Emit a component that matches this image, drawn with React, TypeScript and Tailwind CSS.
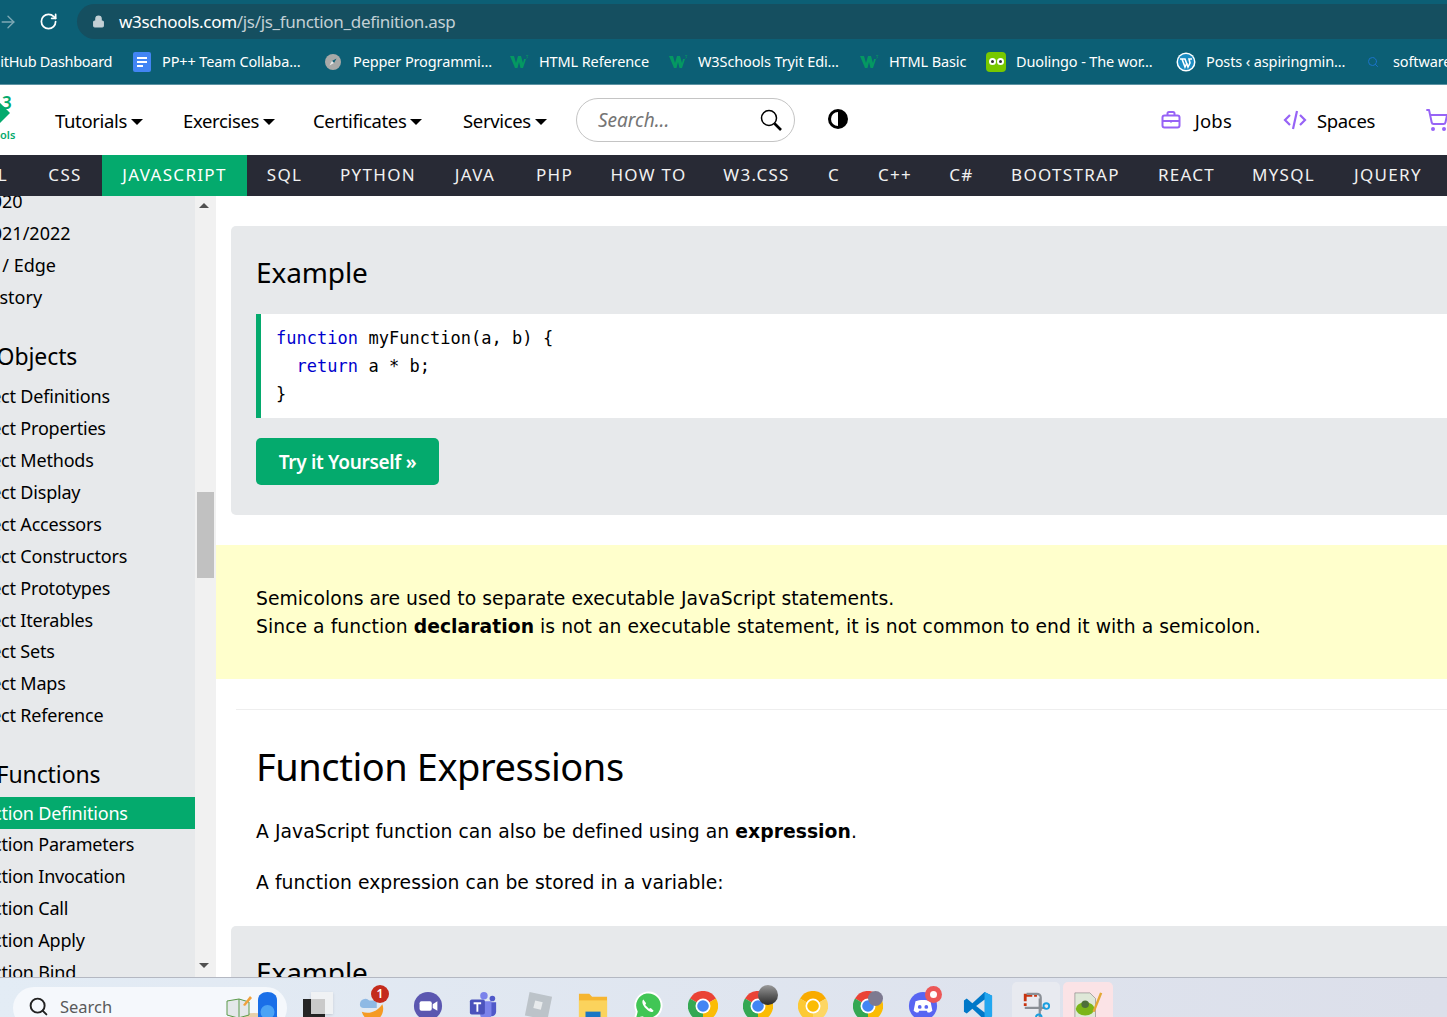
import { ReactNode } from "react";
import { Lock, RotateCw, ArrowRight, Search, ShoppingCart } from "lucide-react";

const navFont = "font-['Noto_Sans',sans-serif]";

const topics = [
  { label: "CSS", w: "w-[74px]" },
  { label: "JAVASCRIPT", w: "w-[145px]", active: true },
  { label: "SQL", w: "w-[75px]" },
  { label: "PYTHON", w: "w-[112px]" },
  { label: "JAVA", w: "w-[82px]" },
  { label: "PHP", w: "w-[77px]" },
  { label: "HOW TO", w: "w-[111px]" },
  { label: "W3.CSS", w: "w-[105px]" },
  { label: "C", w: "w-[50px]" },
  { label: "C++", w: "w-[72px]" },
  { label: "C#", w: "w-[61px]" },
  { label: "BOOTSTRAP", w: "w-[147px]" },
  { label: "REACT", w: "w-[95px]" },
  { label: "MYSQL", w: "w-[99px]" },
  { label: "JQUERY", w: "w-[110px]" },
];

const jsRows = ["JS 2020", "JS 2021/2022", "JS IE / Edge", "JS History"];
const objectRows = [
  "Object Definitions",
  "Object Properties",
  "Object Methods",
  "Object Display",
  "Object Accessors",
  "Object Constructors",
  "Object Prototypes",
  "Object Iterables",
  "Object Sets",
  "Object Maps",
  "Object Reference",
];
const functionRows = [
  "Function Definitions",
  "Function Parameters",
  "Function Invocation",
  "Function Call",
  "Function Apply",
  "Function Bind",
];

function W3Mark() {
  return (
    <svg viewBox="0 0 20 16" className="h-4 w-5">
      <polygon points="1,2 5,2 7,9 9,2 12,2 14,9 15,5 17,5 14,14 11.5,14 10,8 8.5,14 6,14" fill="#059862" />
      <path d="M17 1.5h2l-1 1.2c.8.2.8 1.6-.6 1.6" fill="none" stroke="#059862" strokeWidth=".6" />
    </svg>
  );
}

function Bookmark({ icon, label, w }: { icon: ReactNode; label: string; w: string }) {
  return (
    <div className="flex shrink-0 items-center">
      <span className="flex w-5 shrink-0 items-center justify-center">{icon}</span>
      <span className={`ml-[10px] whitespace-nowrap ${w}`}>{label}</span>
    </div>
  );
}

function ChromeIcon({ c1 = "#ea4335", c2 = "#34a853", c3 = "#fbbc04", c4 = "#4285f4" }) {
  return (
    <svg viewBox="0 0 32 32" className="h-[30px] w-[30px]">
      <path d="M16 16 L2.1 8 A16 16 0 0 1 29.9 8 Z" fill={c1} />
      <path d="M16 16 L2.1 8 A16 16 0 0 0 16 32 Z" fill={c2} />
      <path d="M16 16 L29.9 8 A16 16 0 0 1 16 32 Z" fill={c3} />
      <circle cx="16" cy="16" r="8" fill="#fff" />
      <circle cx="16" cy="16" r="6.2" fill={c4} />
    </svg>
  );
}

function TaskSlot({ children, box = "w-[55px]" }: { children: ReactNode; box?: string }) {
  return <div className={`relative flex h-[35px] shrink-0 justify-center pt-[9px] ${box}`}>{children}</div>;
}

function SideRow({ label, active }: { label: string; active?: boolean }) {
  return (
    <div
      className={`flex h-[31.875px] items-center whitespace-nowrap text-[18px] ${
        active ? "bg-[#04AA6D] text-white" : "text-black"
      }`}
    >
      <span className="-ml-[38px]">{label}</span>
    </div>
  );
}

function SideHeading({ label, h }: { label: string; h: string }) {
  return (
    <div className={`flex items-center whitespace-nowrap pt-[19px] text-[23px] tracking-[-0.1px] text-black ${h}`}>
      <span className="-ml-[28px]">{label}</span>
    </div>
  );
}

function NavLink({ label, w }: { label: string; w: string }) {
  return (
    <div className={`mt-[2px] flex shrink-0 items-center ${w}`}>
      <span>{label}</span>
      <span className="ml-[4px] mt-[1px] h-0 w-0 border-x-[6px] border-t-[6px] border-x-transparent border-t-black" />
    </div>
  );
}

export default function App() {
  return (
    <div className={`flex h-[1017px] w-[1447px] flex-col overflow-hidden bg-white ${navFont}`}>
      {/* browser toolbar */}
      <div className="flex h-[39px] shrink-0 items-end bg-[#0c5f75]">
        <div className="flex h-[35px] w-[77px] shrink-0 items-center">
          <ArrowRight size={20} strokeWidth={1.6} className="-ml-[2px] text-[#7fa9b5]" />
          <RotateCw size={19} strokeWidth={2.2} className="ml-[21px] text-white" />
        </div>
        <div className="flex h-[35px] flex-1 items-center rounded-l-[18px] bg-[#154f60] pl-[15px] text-[17px] tracking-[-0.32px]">
          <Lock size={13} fill="#c3d0d5" strokeWidth={2} className="text-[#c3d0d5]" />
          <span className="ml-[14px] text-white">w3schools.com</span>
          <span className="text-[#c3d0d5]">/js/js_function_definition.asp</span>
        </div>
      </div>

      {/* bookmarks */}
      <div className="flex h-[46px] shrink-0 items-center gap-[20px] border-b border-[#5d93a3] bg-[#0c5f75] text-[14.5px] tracking-[-0.12px] text-white">
        <span className="-ml-[10px] w-[122px] shrink-0 whitespace-nowrap text-right tracking-[-0.3px]">GitHub Dashboard</span>
        <Bookmark
          w="w-[141px]"
          label="PP++ Team Collaba..."
          icon={
            <span className="flex h-[20px] w-[18px] flex-col justify-center gap-[2px] rounded-[2px] bg-[#4285f4] px-[4px]">
              <span className="h-[2px] bg-white" />
              <span className="h-[2px] bg-white" />
              <span className="h-[2px] w-[6px] bg-white" />
            </span>
          }
        />
        <Bookmark
          w="w-[136px]"
          label="Pepper Programmi..."
          icon={
            <svg viewBox="0 0 16 16" className="h-4 w-4">
              <circle cx="8" cy="8" r="8" fill="#a8a9a8" />
              <polygon points="11.5,4.5 9,9 7,7" fill="#0c5f75" />
              <polygon points="4.5,11.5 7,7 9,9" fill="#e8e8e8" />
            </svg>
          }
        />
        <Bookmark w="w-[109px]" label="HTML Reference" icon={<W3Mark />} />
        <Bookmark w="w-[141px]" label="W3Schools Tryit Edi..." icon={<W3Mark />} />
        <Bookmark w="w-[77px]" label="HTML Basic" icon={<W3Mark />} />
        <Bookmark
          w="w-[140px]"
          label="Duolingo - The wor..."
          icon={
            <span className="flex h-5 w-5 items-center justify-center gap-[1px] rounded-[4px] bg-[#78c800]">
              <span className="h-[7px] w-[7px] rounded-full border-2 border-white bg-[#333]" />
              <span className="h-[7px] w-[7px] rounded-full border-2 border-white bg-[#333]" />
            </span>
          }
        />
        <Bookmark
          w="w-[137px]"
          label="Posts ‹ aspiringmin..."
          icon={
            <svg viewBox="0 0 20 20" className="h-5 w-5">
              <circle cx="10" cy="10" r="9.5" fill="#fff" />
              <circle cx="10" cy="10" r="8" fill="#1a8cc2" />
              <path d="M4 7h5l3 8 2-4-1-4h3" fill="none" stroke="#fff" strokeWidth="1.6" />
              <path d="M6 7l3 8 2-4" fill="none" stroke="#fff" strokeWidth="1.6" />
            </svg>
          }
        />
        <Bookmark w="w-[80px]" label="software" icon={<Search size={12} strokeWidth={2} className="text-[#1b73c9]" />} />
      </div>

      {/* site nav */}
      <div className="flex h-[70px] shrink-0 items-center bg-white text-[18.5px] tracking-[-0.35px] text-black">
        <div className="relative h-full w-[55px] shrink-0">
          <span className="absolute left-[2px] top-[5px] text-[17px] font-semibold text-[#04AA6D]">3</span>
          <span className="absolute -left-[9px] top-[20px] h-[20px] w-[14px] rotate-45 bg-[#04AA6D]" />
          <span className="absolute left-0 top-[42px] text-[11px] font-semibold tracking-normal text-[#04AA6D]">ols</span>
        </div>
        <NavLink label="Tutorials" w="w-[128px]" />
        <NavLink label="Exercises" w="w-[130px]" />
        <NavLink label="Certificates" w="w-[150px]" />
        <NavLink label="Services" w="w-[113px]" />
        <div className="flex h-[44px] w-[219px] shrink-0 items-center justify-between rounded-full border border-[#c4c4c4] pl-[21px] pr-[11px] text-[19px] italic tracking-normal text-[#757575]">
          <span>Search...</span>
          <svg viewBox="0 0 24 24" className="h-6 w-6" fill="none" stroke="#000">
            <circle cx="10" cy="10" r="7.5" strokeWidth="1.5" />
            <path d="M15.5 15.5L22 22" strokeWidth="2.6" />
          </svg>
        </div>
        <svg viewBox="0 0 20 20" className="-mt-[2px] ml-[33px] h-5 w-5 shrink-0">
          <circle cx="10" cy="10" r="10" fill="#000" />
          <path d="M10 3a7 7 0 0 0 0 14z" fill="#fff" />
        </svg>
        <div className="ml-auto mt-[2px] flex items-center">
          <svg viewBox="0 0 20 20" fill="none" stroke="#9763f6" strokeWidth="2" className="-mt-[2px] h-5 w-5">
            <rect x="1.5" y="5.5" width="17" height="12" rx="2" />
            <path d="M6.5 5V3.5a1.5 1.5 0 0 1 1.5-1.5h4a1.5 1.5 0 0 1 1.5 1.5V5M1.5 11h17M10 10v2.5" />
          </svg>
          <span className="ml-[14px] tracking-[0.2px]">Jobs</span>
          <svg viewBox="0 0 24 20" fill="none" stroke="#9763f6" strokeWidth="2.2" className="-mt-[2px] ml-[51px] h-5 w-6">
            <path d="M7 5l-5 5 5 5M17 5l5 5-5 5M14 1l-4 18" />
          </svg>
          <span className="ml-[10px]">Spaces</span>
          <ShoppingCart size={24} strokeWidth={2} className="-mr-[2px] -mt-[2px] ml-[50px] text-[#9763f6]" />
        </div>
      </div>

      {/* topic bar */}
      <div className="flex h-[41px] shrink-0 items-stretch bg-[#282A35] text-[17px] tracking-[1.3px] text-[#f1f1f1]">
        <span className="flex w-[28px] shrink-0 items-center justify-end overflow-hidden pb-[2px] pr-[20px]">L</span>
        {topics.map((t) => (
          <span
            key={t.label}
            className={`flex shrink-0 items-center justify-center whitespace-nowrap pb-[2px] ${t.w} ${t.active ? "bg-[#04AA6D] text-white" : ""}`}
          >
            {t.label}
          </span>
        ))}
      </div>

      {/* page */}
      <div className="flex min-h-0 flex-1">
        <aside className="w-[195px] shrink-0 overflow-hidden bg-[#E7E9EB]">
          <div className="-mt-[10px]">
            {jsRows.map((r) => (
              <SideRow key={r} label={r} />
            ))}
            <SideHeading label="JS Objects" h="h-[66.5px]" />
            <div className="mt-[1px] tracking-[-0.2px]">
              {objectRows.map((r) => (
                <SideRow key={r} label={r} />
              ))}
            </div>
            <SideHeading label="JS Functions" h="h-[65.5px]" />
            <div className="tracking-[-0.2px]">
              {functionRows.map((r) => (
                <SideRow key={r} label={r} active={r === "Function Definitions"} />
              ))}
            </div>
          </div>
        </aside>

        <div className="relative flex w-[21px] shrink-0 flex-col items-center bg-[#f1f1f1] pr-[3px] pt-[7px]">
          <span className="h-0 w-0 border-x-[5px] border-b-[5px] border-x-transparent border-b-[#505050]" />
          <span className="absolute left-[2px] top-[296px] h-[86px] w-[17px] bg-[#c1c1c1]" />
          <span className="absolute bottom-[9px] h-0 w-0 border-x-[5px] border-t-[5px] border-x-transparent border-t-[#505050]" />
        </div>

        <main className="min-w-0 flex-1 overflow-hidden bg-white text-black">
          <div className="ml-[15px] mt-[30px] h-[289px] w-[1300px] rounded-[5px] bg-[#E7E9EB] pl-[25px] pt-[26px]">
            <h3 className="text-[28px] leading-[40px] tracking-[-0.1px]">Example</h3>
            <pre className="mt-[22px] h-[104px] border-l-[5px] border-[#04AA6D] bg-white pl-[15px] pt-[10px] font-['DejaVu_Sans_Mono',monospace] text-[17px] leading-[28px] tracking-[0.03px]">
              <span className="text-[#0000cd]">function</span> myFunction(a, b) {"{"}
              {"\n"}  <span className="text-[#0000cd]">return</span> a * b;
              {"\n"}
              {"}"}
            </pre>
            <button className="mt-[20px] h-[47px] w-[183px] rounded-[5px] bg-[#04AA6D] pt-[2px] text-[19px] font-semibold tracking-[-0.3px] text-white">
              Try it Yourself »
            </button>
          </div>

          <div className="mt-[30px] h-[134px] bg-[#ffffcc] pl-[40px] pt-[40px] font-['DejaVu_Sans',sans-serif] text-[18.75px] leading-[28px] tracking-[0.05px]">
            <p>Semicolons are used to separate executable JavaScript statements.</p>
            <p>
              Since a function <b>declaration</b> is not an executable statement, it is not common to end it with a
              semicolon.
            </p>
          </div>

          <hr className="ml-[20px] mt-[30px] border-[#eeeeee]" />

          <h2 className="ml-[40px] mt-[28px] text-[38px] leading-[56px] tracking-[-0.45px]">Function Expressions</h2>
          <div className="ml-[40px] font-['DejaVu_Sans',sans-serif] text-[18.75px] leading-[28px] tracking-[0.05px]">
            <p className="mt-[24px]">
              A JavaScript function can also be defined using an <b>expression</b>.
            </p>
            <p className="mt-[23px]">A function expression can be stored in a variable:</p>
          </div>

          <div className="ml-[15px] mt-[29px] h-[289px] w-[1300px] rounded-[5px] bg-[#E7E9EB] pl-[25px] pt-[26px]">
            <h3 className="text-[28px] leading-[40px] tracking-[-0.1px]">Example</h3>
          </div>
        </main>
      </div>

      {/* windows taskbar */}
      <div className="flex h-[40px] shrink-0 items-end overflow-hidden border-t border-[#b4b8c2] bg-gradient-to-r from-[#e3ecf5] to-[#dcdfea]">
        <div className="relative mb-[-12px] ml-[13px] mr-[3px] flex h-[42px] w-[274px] shrink-0 items-start rounded-full bg-[#f5f8fc] pl-[15px] pt-[8px] text-[16.5px] text-[#5a5a5a]">
          <Search size={21} strokeWidth={2.2} className="mt-[1px] text-[#222]" />
          <span className="ml-[11px]">Search</span>
          <svg viewBox="0 0 60 34" className="absolute right-[3px] top-[1px] h-[34px] w-[60px]">
            <ellipse cx="30" cy="33" rx="28" ry="8" fill="#e8cfa9" />
            <path d="M3 13l12-2 10 3v13l-11 3-11-3z" fill="#e4e8ea" stroke="#5b9a4a" />
            <path d="M15 11v19" stroke="#5b9a4a" />
            <path d="M19 17l7-9 2 2-7 8z" fill="#f0a13c" />
            <path d="M34 12c0-5 4-8 9.500-8s9.500 3 9.500 8v18c0 2-4 3-9.500 3s-9.500-1-9.500-3z" fill="#1a6fe8" />
            <circle cx="43.500" cy="24" r="7" fill="#4aa3f5" />
          </svg>
        </div>
        <TaskSlot>
          <span className="relative h-[30px] w-[30px]">
            <span className="absolute left-0 top-[8px] h-[22px] w-[22px] bg-[#262626]" />
            <span className="absolute left-[8px] top-[1px] h-[22px] w-[22px] bg-[#f4f4f4]/80 shadow-sm" />
          </span>
        </TaskSlot>
        <TaskSlot>
          <svg viewBox="0 0 32 32" className="h-[30px] w-[30px]">
            <path d="M2 14a6 6 0 0 1 10-4h8v8H6a4 4 0 0 1-4-4z" fill="#8fb9e4" />
            <path d="M4 22c8 3 16 0 22-8 3 8-2 18-11 18-5 0-9-4-11-10z" fill="#f59a23" />
          </svg>
          <span className="absolute left-[26px] top-[3px] flex h-[18px] w-[18px] items-center justify-center rounded-full bg-[#c42b1c] text-[12px] font-semibold text-white">
            1
          </span>
        </TaskSlot>
        <TaskSlot>
          <svg viewBox="0 0 32 32" className="h-[30px] w-[30px]">
            <circle cx="16" cy="16" r="15" fill="#5b57b0" />
            <rect x="7" y="11" width="13" height="10" rx="2" fill="#fff" />
            <path d="M21 14l5-3v10l-5-3z" fill="#fff" />
          </svg>
        </TaskSlot>
        <TaskSlot>
          <svg viewBox="0 0 32 32" className="h-[30px] w-[30px]">
            <circle cx="17" cy="5" r="4" fill="#7b83eb" />
            <circle cx="26" cy="8" r="3" fill="#5059c9" />
            <path d="M20 12h10v10a5 5 0 0 1-10 0z" fill="#5059c9" />
            <path d="M10 11h15v14a6 6 0 0 1-12 0z" fill="#7b83eb" />
            <rect x="2" y="9" width="16" height="16" rx="2" fill="#4b53bc" />
            <path d="M6 13h8M10 13v9" stroke="#fff" strokeWidth="2" />
          </svg>
        </TaskSlot>
        <TaskSlot>
          <svg viewBox="0 0 32 32" className="h-[30px] w-[30px]">
            <polygon points="7,1 31,6 26,31 2,26" fill="#bcc3c9" />
            <polygon points="13,10 21,12 19,20 11,18" fill="#e7eaec" />
          </svg>
        </TaskSlot>
        <TaskSlot>
          <svg viewBox="0 0 32 32" className="h-[30px] w-[30px]">
            <path d="M1 3h11l3 3h16v24H1z" fill="#f6b530" />
            <path d="M1 10h30v20H1z" fill="#fbd35c" />
            <rect x="8" y="22" width="16" height="8" fill="#1a76c4" />
          </svg>
        </TaskSlot>
        <TaskSlot>
          <svg viewBox="0 0 32 32" className="h-[30px] w-[30px]">
            <path d="M2 30l2-8a14 14 0 1 1 6 6z" fill="#41c655" stroke="#fff" strokeWidth="2" />
            <path d="M11 9c-2 2-1 6 3 10s7 4 8 2l-3-3-2 1-4-4 1-2z" fill="#fff" />
          </svg>
        </TaskSlot>
        <TaskSlot>
          <ChromeIcon />
        </TaskSlot>
        <TaskSlot>
          <ChromeIcon />
          <span className="absolute left-[28px] top-[3px] h-[20px] w-[20px] rounded-full bg-gradient-to-b from-[#9a9a9a] to-[#2c2c2c]" />
        </TaskSlot>
        <TaskSlot>
          <ChromeIcon c1="#f9ab00" c2="#fcc934" c3="#fdd663" c4="#fbbc04" />
        </TaskSlot>
        <TaskSlot>
          <ChromeIcon />
          <span className="absolute left-[28px] top-[9px] h-[15px] w-[15px] rounded-full bg-[#7d7a90]" />
        </TaskSlot>
        <TaskSlot>
          <svg viewBox="0 0 32 32" className="h-[30px] w-[30px]">
            <circle cx="16" cy="16" r="15" fill="#5865f2" />
            <path d="M8 11c5-2 11-2 16 0l2 10c-2 2-4 2-5 2l-1-2h-8l-1 2c-1 0-3 0-5-2z" fill="#fff" />
            <circle cx="12.5" cy="17" r="2" fill="#5865f2" />
            <circle cx="19.5" cy="17" r="2" fill="#5865f2" />
          </svg>
          <span className="absolute left-[30px] top-[4px] flex h-[17px] w-[17px] items-center justify-center rounded-full bg-[#ec5757]">
            <span className="h-[7px] w-[7px] rounded-full bg-white" />
          </span>
        </TaskSlot>
        <TaskSlot>
          <svg viewBox="0 0 32 32" className="h-[30px] w-[30px]">
            <path d="M23 1l8 4v22l-8 4-13-12-6 5-3-2v-12l3-2 6 5z" fill="#0078c8" />
            <path d="M23 1l8 4v22l-8 4z" fill="#22a7f0" />
            <path d="M23 9l-9 7 9 7z" fill="#e0e6ee" />
          </svg>
        </TaskSlot>
        <TaskSlot box="ml-[7px] mr-[3px] w-[48px] rounded-t-[5px] bg-[#e8eaf0]">
          <svg viewBox="0 0 32 32" className="h-[30px] w-[30px]">
            <path d="M3 3h9v3H6v5H3z" fill="#c8330f" />
            <path d="M3 13h3v3H3zM14 3h3v3h-3z" fill="#c8330f" />
            <path d="M6 3h11a4 4 0 0 1 4 4v14" fill="none" stroke="#8a8f96" strokeWidth="2.4" />
            <path d="M4 18h22M20 8v20" stroke="#8a8f96" strokeWidth="2.4" />
            <circle cx="27" cy="16" r="3" fill="none" stroke="#1a9fe0" strokeWidth="2" />
            <circle cx="19" cy="28" r="3" fill="none" stroke="#1a9fe0" strokeWidth="2" />
          </svg>
        </TaskSlot>
        <TaskSlot box="w-[50px] rounded-t-[5px] bg-[#fbe3e6]">
          <svg viewBox="0 0 32 32" className="h-[30px] w-[30px]">
            <path d="M2 2h16l6 6v22H2z" fill="#dfe8d8" stroke="#777" strokeWidth=".6" />
            <ellipse cx="13" cy="19" rx="10" ry="7" fill="#7cb518" />
            <circle cx="13" cy="14" r="4" fill="#4e6f3a" />
            <path d="M22 22L30 2" stroke="#e4a834" strokeWidth="2.6" />
          </svg>
        </TaskSlot>
      </div>
    </div>
  );
}
